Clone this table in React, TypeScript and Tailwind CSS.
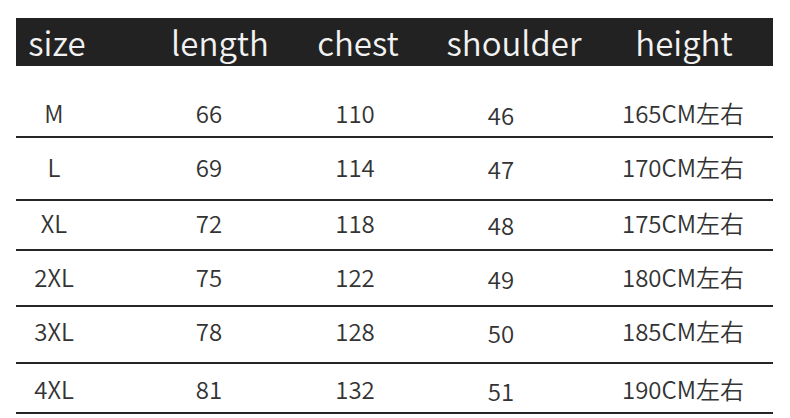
import React from 'react';

const FONT = '"Noto Sans CJK SC", "Noto Sans", sans-serif';

// header cells: box width + left margin so the word centres line up with the picture
const HEAD = [
  { label: 'size', cls: 'w-[82px]' },
  { label: 'length', cls: 'w-[148px] ml-[48px]' },
  { label: 'chest', cls: 'w-[120px] ml-[4px]' },
  { label: 'shoulder', cls: 'w-[140px] ml-[26px]' },
  { label: 'height', cls: 'w-[160px] ml-[20px]' },
];

// body columns
const COLS = [
  'w-[76px]',
  'w-[150px] ml-[42px]',
  'w-[120px] ml-[11px]',
  'w-[120px] ml-[26px] pt-[2px]',
  'w-[180px] ml-[32px]',
];

const ROWS = [
  { cells: ['M', '66', '110', '46', '165CM左右'], cls: 'h-[72px] pt-[32px]' },
  { cells: ['L', '69', '114', '47', '170CM左右'], cls: 'h-[63px] pt-[14px]' },
  { cells: ['XL', '72', '118', '48', '175CM左右'], cls: 'h-[50px] pt-[7px]' },
  { cells: ['2XL', '75', '122', '49', '180CM左右'], cls: 'h-[56px] pt-[11px]' },
  { cells: ['3XL', '78', '128', '50', '185CM左右'], cls: 'h-[57px] pt-[9px]' },
  { cells: ['4XL', '81', '132', '51', '190CM左右'], cls: 'h-[50px] pt-[10px]' },
];

export default function App() {
  return (
    <div className="w-[790px] h-[418px] bg-white overflow-hidden pt-[18px] pl-[16px]" style={{ fontFamily: FONT }}>
      <div className="w-[757px]">
        {/* header bar */}
        <div className="flex h-[48px] items-center bg-[#222222] text-[#f2f2f2] text-[33px] leading-[48px] font-[350]">
          {HEAD.map(h => (
            <div key={h.label} className={`${h.cls} text-center`}>{h.label}</div>
          ))}
        </div>

        {/* rows */}
        {ROWS.map(row => (
          <div key={row.cells[0]} className={`flex items-start border-b-2 border-[#262626] ${row.cls}`}>
            {row.cells.map((c, i) => (
              <div key={i} className={`${COLS[i]} text-center text-[24px] leading-[30px] font-[350] text-[#333333]`}>{c}</div>
            ))}
          </div>
        ))}
      </div>
    </div>
  );
}
